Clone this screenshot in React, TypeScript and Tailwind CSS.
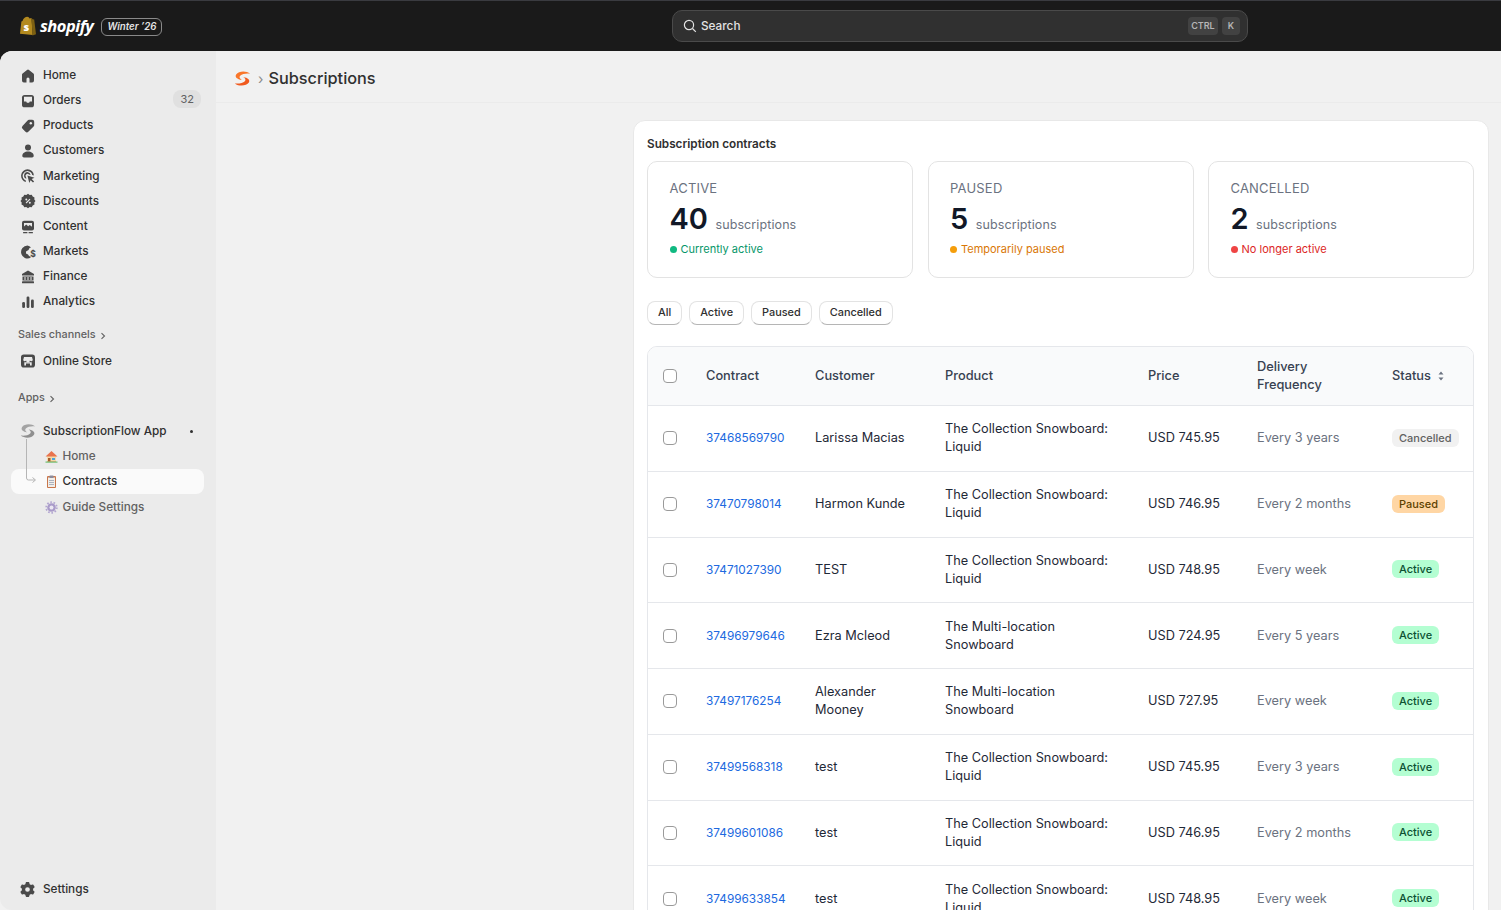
import React from "react";
import { FaGear } from "react-icons/fa6";

const I = ({ children }: { children: React.ReactNode }) => (
  <svg width="16" height="16" viewBox="0 0 16 16" fill="#4a4a4a" className="shrink-0">{children}</svg>
);

const icons: Record<string, React.ReactNode> = {
  home: <I><path d="M7 1.900a1.600 1.600 0 0 1 2 0l4.400 3.600c.4.300.6.800.6 1.300v5.700a1.900 1.900 0 0 1-1.900 1.900H9.500V11a1.500 1.500 0 0 0-3 0v3.400H3.900A1.900 1.900 0 0 1 2 12.500V6.800c0-.5.200-1 .6-1.300z" /></I>,
  orders: <I><rect x="2" y="2" width="12" height="12.300" rx="2.600" /><path d="M4 3.800h8v4.700h-2.200l-.7 1.300H6.900L6.200 8.500H4z" fill="#ebebeb" /></I>,
  products: <I><path d="M9 1.800h3.200a2 2 0 0 1 2 2V7a2 2 0 0 1-.6 1.400l-5.300 5.300a2 2 0 0 1-2.800 0l-3-3a2 2 0 0 1 0-2.800l5.100-5.500A2 2 0 0 1 9 1.800z" /><circle cx="10.800" cy="5.200" r="1.200" fill="#ebebeb" /></I>,
  customers: <I><circle cx="8" cy="4.400" r="3" /><path d="M8 8.500c-3.200 0-5.700 1.800-5.700 4.200 0 1 .7 1.700 1.600 1.700h8.200c.9 0 1.600-.7 1.600-1.700 0-2.400-2.500-4.200-5.700-4.200z" /></I>,
  marketing: <I><path d="M7.500 1.200a6.500 6.500 0 0 0-1.500 12.800l-.4-1.700a4.800 4.800 0 1 1 6.600-5.300l1.700.4A6.500 6.500 0 0 0 7.500 1.200z" /><path d="M7.500 4a3.500 3.500 0 0 0-1.100 6.800L6 9.100a1.900 1.900 0 1 1 2.900-2.500l1.700.4A3.500 3.500 0 0 0 7.500 4z" /><path d="M7.400 7.400l7.100 2.400-2.800 1.300 2.400 2.400-1.100 1.100-2.400-2.400-1.300 2.800z" /></I>,
  discounts: <I><path d="M8 .8l1.700 1.200 2-.2 1 1.800 1.800 1-.2 2L15.500 8l-1.200 1.400.2 2-1.800 1-1 1.800-2-.2L8 15.200 6.300 14l-2 .2-1-1.800-1.800-1 .2-2L.5 8l1.200-1.400-.2-2 1.800-1 1-1.800 2 .2z" /><path d="M10 6.200L6.100 10" stroke="#ebebeb" strokeWidth="1.100" /><circle cx="6.300" cy="6.500" r="1" fill="#ebebeb" /><circle cx="9.800" cy="9.700" r="1" fill="#ebebeb" /></I>,
  content: <I><rect x="2" y="1.800" width="12" height="9.700" rx="2" /><path d="M4 7.500l2.200-2 2 1.800 1.500-1.200L12 7.800v-3.800H4z" fill="#ebebeb" /><rect x="3" y="13" width="4.500" height="1.300" rx=".6" /><rect x="8.500" y="13" width="4.500" height="1.300" rx=".6" /></I>,
  markets: <I><path d="M7.500 1.500a6.500 6.500 0 1 0 3 12.300v-1.500H9.200L8 10.500 6 9.500V7.500l2.500-1.500 1-2 1.500-.5A6.500 6.500 0 0 0 7.500 1.500z" /><text x="10.300" y="12.800" fontSize="8.500" fontFamily="Inter, sans-serif" fontWeight="700">$</text></I>,
  finance: <I><path d="M8 1.500L14 5v1.500H2V5z" /><rect x="2.500" y="7.500" width="11" height="4" /><rect x="2" y="12.300" width="12" height="2" rx=".6" /><path d="M5 8v3M8 8v3M11 8v3" stroke="#ebebeb" strokeWidth="1" /></I>,
  analytics: <I><rect x="2.200" y="8" width="2.800" height="6" rx="1.300" /><rect x="6.600" y="2.500" width="2.800" height="11.500" rx="1.300" /><rect x="11" y="5.500" width="2.800" height="8.500" rx="1.300" /></I>,
  store: <I><rect x="1" y="1.500" width="14" height="13" rx="2.800" /><path d="M4 4h8l.8 3a1.600 1.600 0 0 1-2.900.6 1.700 1.700 0 0 1-3.800 0A1.600 1.600 0 0 1 3.200 7z" fill="#ebebeb" /><path d="M4.300 9.300h7.400V12.500H10V10.500H6V12.500H4.300z" fill="#ebebeb" /></I>,
};

const SLogo = ({ a, b, size = 16 }: { a: string; b: string; size?: number }) => {
  const d = "M15.200 3.400C11.500.4 4.300.7 2 4.200.5 6.600 3 8.600 7.300 9.400 5.300 8.100 4.600 6.700 5.800 5.500 7.700 3.600 11.600 2.900 15.200 3.400z";
  return (
    <svg width={size} height={size} viewBox="0 0 16 16" className="shrink-0">
      <path d={d} fill={a} />
      <path d={d} fill={b} transform="rotate(180 8 8)" />
    </svg>
  );
};

const nav = [
  ["home", "Home"],
  ["orders", "Orders"],
  ["products", "Products"],
  ["customers", "Customers"],
  ["marketing", "Marketing"],
  ["discounts", "Discounts"],
  ["content", "Content"],
  ["markets", "Markets"],
  ["finance", "Finance"],
  ["analytics", "Analytics"],
];

const Chevron = () => (
  <svg width="8" height="8" viewBox="0 0 8 8" fill="none" stroke="#616161" strokeWidth="1.100" className="ml-[3px] mt-[2px]">
    <path d="M2.500 1.200L5.500 4 2.500 6.800" />
  </svg>
);

const rows: [string, string[], string[], string, string, string][] = [
  ["37468569790", ["Larissa Macias"], ["The Collection Snowboard:", "Liquid"], "USD 745.95", "Every 3 years", "Cancelled"],
  ["37470798014", ["Harmon Kunde"], ["The Collection Snowboard:", "Liquid"], "USD 746.95", "Every 2 months", "Paused"],
  ["37471027390", ["TEST"], ["The Collection Snowboard:", "Liquid"], "USD 748.95", "Every week", "Active"],
  ["37496979646", ["Ezra Mcleod"], ["The Multi-location", "Snowboard"], "USD 724.95", "Every 5 years", "Active"],
  ["37497176254", ["Alexander", "Mooney"], ["The Multi-location", "Snowboard"], "USD 727.95", "Every week", "Active"],
  ["37499568318", ["test"], ["The Collection Snowboard:", "Liquid"], "USD 745.95", "Every 3 years", "Active"],
  ["37499601086", ["test"], ["The Collection Snowboard:", "Liquid"], "USD 746.95", "Every 2 months", "Active"],
  ["37499633854", ["test"], ["The Collection Snowboard:", "Liquid"], "USD 748.95", "Every week", "Active"],
];

const Badge = ({ s }: { s: string }) => {
  if (s === "Active")
    return <span className="rounded-md bg-[#b4fed2] px-[7px] text-[11px] font-medium leading-[18px] text-[#0c5132]">{s}</span>;
  if (s === "Paused")
    return <span className="rounded-md bg-[#ffd6a4] px-[7px] text-[11px] font-medium leading-[18px] text-[#5e4200]">{s}</span>;
  return <span className="rounded-md bg-[#f1f1f1] px-[7px] text-[11px] font-medium leading-[18px] text-[#616161]">{s}</span>;
};

const Check = () => <div className="h-[14px] w-[14px] rounded-[4px] border border-[#9a9a9a] bg-white" />;

const Stat = ({ label, n, note, dot, color }: { label: string; n: string; note: string; dot: string; color: string }) => (
  <div className="h-[117px] rounded-[10px] border border-[#e3e3e3] bg-white pl-[21.500px] pt-[17px]">
    <div className="text-[13px] leading-[18px] tracking-[0.2px] text-[#6b7280]">{label}</div>
    <div className="mt-[5px] flex h-[34px] items-end">
      <span className="text-[29px] font-semibold leading-[34px] text-[#111827]">{n}</span>
      <span className="mb-[2px] ml-[7.500px] text-[12.500px] leading-[18px] tracking-[0.1px] text-[#6b7280]">subscriptions</span>
    </div>
    <div className="mt-[5px] flex items-center text-[11px] leading-[16px]" style={{ color }}>
      <span className="mr-[4px] h-[7px] w-[7px] rounded-full" style={{ background: dot }} />
      {note}
    </div>
  </div>
);

const cols = "grid grid-cols-[58px_109px_130px_203px_109px_135px_1fr] items-center";

export default function App() {
  return (
    <div className="flex h-[910px] w-[1501px] flex-col overflow-hidden bg-[#1a1a1a] font-['Inter',sans-serif] text-[12.750px]">
      {/* Top bar */}
      <header className="grid h-[51px] shrink-0 grid-cols-[672px_576px_1fr] items-center border-t border-[#3a3b40]">
        <div className="flex items-center pl-[19px]">
          <svg width="18" height="20" viewBox="0 0 18 20">
            <path d="M3.500 5C4.500 2 6.500.8 8.200.8c1.200 0 2 .8 2.300 1.800l2-.6 1.200 17L1 17.800 2.400 5.500z" fill="#b38a1f" />
            <path d="M12.500 2l1.200 1.200 1.500.2 1.800 14.800-3.500 1.300z" fill="#7d6012" />
            <text x="4.600" y="14.500" fontSize="11" fontWeight="800" fill="#fff" fontFamily="'Open Sans', sans-serif">s</text>
          </svg>
          <span className="ml-[3px] font-['Open_Sans',sans-serif] text-[16.500px] font-bold italic leading-none tracking-[-0.5px] text-white">shopify</span>
          <span className="ml-[8px] mt-[1px] rounded-[6px] border border-[#8a8a8a] px-[5px] text-[9.700px] font-semibold italic leading-[16px] text-[#e3e3e3]">Winter ’26</span>
        </div>
        <div className="flex h-[32px] items-center rounded-[10px] border border-[#4a4a4a] bg-[#303030] pl-[10px] pr-[7px]">
          <svg width="14" height="14" viewBox="0 0 14 14" fill="none" stroke="#e3e3e3" strokeWidth="1.200">
            <circle cx="6" cy="6" r="4.600" />
            <path d="M9.500 9.500L12.800 12.800" />
          </svg>
          <span className="ml-[4px] mt-[1px] flex-1 text-[11.750px] font-medium text-[#e3e3e3]">Search</span>
          <span className="rounded-[4px] bg-[#424242] px-[3px] text-[9px] font-semibold leading-[18px] text-[#b5b5b5]">CTRL</span>
          <span className="ml-[4px] rounded-[4px] bg-[#424242] px-[6px] text-[9px] font-semibold leading-[18px] text-[#b5b5b5]">K</span>
        </div>
        <div />
      </header>

      <div className="flex min-h-0 flex-1 overflow-hidden rounded-tl-xl bg-[#f1f1f1]">
        {/* Sidebar */}
        <aside className="flex w-[216px] shrink-0 flex-col rounded-bl-xl bg-[#ebebeb] pt-[12.200px] text-[11.750px] text-[#303030]">
          <nav>
            {nav.map(([k, label]) => (
              <div key={k} className="flex h-[25.150px] items-center pl-[20px] pr-[15px]">
                {icons[k]}
                <span className="ml-[7px] flex-1 font-[450]">{label}</span>
                {label === "Orders" && (
                  <span className="mb-[3px] rounded-lg bg-[#e0e0e0] px-[7px] text-[11px] leading-[18px] text-[#616161]">32</span>
                )}
              </div>
            ))}
          </nav>
          <div className="mt-[9.300px] flex h-[22px] items-center pl-[18px] text-[10.800px] font-medium text-[#616161]">
            Sales channels
            <Chevron />
          </div>
          <div className="mt-[3px] flex h-[25px] items-center pl-[20px]">
            {icons.store}
            <span className="ml-[7px] font-[450]">Online Store</span>
          </div>
          <div className="mt-[13px] flex h-[22px] items-center pl-[18px] text-[10.800px] font-medium text-[#616161]">
            Apps
            <Chevron />
          </div>
          <div className="relative mt-[10px]">
            <svg width="14" height="50" viewBox="0 0 14 50" fill="none" stroke="#b5b5b5" className="absolute left-[26px] top-[20px]">
              <path d="M.5 0V39a2 2 0 0 0 2 2H9M6.500 38.500L9.500 41 6.500 43.500" />
            </svg>
            <div className="flex h-[25px] items-center pl-[20px] pr-[23px]">
              <SLogo a="#a3a3a3" b="#8f8f8f" />
              <span className="ml-[7px] flex-1 font-medium">SubscriptionFlow App</span>
              <span className="h-[3px] w-[3px] rounded-full bg-[#303030]" />
            </div>
            <div className="flex h-[25px] items-center pl-[45px] text-[#616161]">
              <svg width="13" height="13" viewBox="0 0 13 13" className="shrink-0">
                <path d="M6.500 1L.5 6.500h1.500V12h9V6.500h1.500z" fill="#e8744f" />
                <rect x="2" y="6.500" width="9" height="5" fill="#f5d9a8" />
                <rect x="3" y="8" width="2.500" height="3.500" fill="#a65c2e" />
                <rect x="7" y="8" width="3" height="2" fill="#4aa3df" />
                <rect x="0.500" y="11.500" width="12" height="1.200" fill="#6fbf73" />
              </svg>
              <span className="ml-[4.500px] font-[450]">Home</span>
            </div>
            <div className="ml-[11px] mr-[12px] flex h-[25px] items-center rounded-lg bg-[#fafafa] pl-[34px] text-[#303030]">
              <svg width="13" height="13" viewBox="0 0 13 13" className="shrink-0">
                <rect x="2" y="1" width="9" height="12" rx="1" fill="#c9764a" />
                <rect x="3" y="2.500" width="7" height="9.500" fill="#f1eee9" />
                <rect x="4.500" y="0.500" width="4" height="2.500" rx=".5" fill="#8b8b9c" />
                <path d="M4 5.500h5M4 7.500h5M4 9.500h5" stroke="#9aa3b5" strokeWidth=".8" />
              </svg>
              <span className="ml-[4.500px] font-medium">Contracts</span>
            </div>
            <div className="flex h-[27px] items-center pl-[45px] text-[#616161]">
              <svg width="13" height="13" viewBox="0 0 13 13" className="shrink-0">
                <circle cx="6.500" cy="6.500" r="4.300" fill="#a99bc9" />
                <circle cx="6.500" cy="6.500" r="5.300" fill="none" stroke="#b3a6d1" strokeWidth="1.800" strokeDasharray="1.600 1.700" />
                <circle cx="6.500" cy="6.500" r="2" fill="#ebe7f2" />
              </svg>
              <span className="ml-[4.500px] font-[450]">Guide Settings</span>
            </div>
          </div>
          <div className="mb-[8px] mt-auto flex h-[25px] items-center pl-[20px]">
            <FaGear size={15} color="#4a4a4a" className="shrink-0" />
            <span className="ml-[8px] font-[450]">Settings</span>
          </div>
        </aside>

        {/* Main */}
        <main className="min-w-0 flex-1 overflow-hidden">
          <div className="flex h-[52px] items-center border-b border-[#ebebeb] pl-[18px] pt-[4px]">
            <SLogo a="#f9762a" b="#f05a1e" size={17} />
            <span className="ml-[7px] mr-[5px] text-[14px] leading-none text-[#8a8a8a]">›</span>
            <span className="text-[16.300px] font-medium text-[#303030]">Subscriptions</span>
          </div>
          <div className="flex justify-end pr-[12px] pt-[17px]">
            <section className="w-[856px] shrink-0 rounded-t-[12px] border border-[#e8e8e8] bg-white pl-[13px] pr-[14px] pt-[14px]">
              <h2 className="text-[11.750px] font-semibold leading-[18px] text-[#303030]">Subscription contracts</h2>
              <div className="mt-[8px] grid grid-cols-3 gap-[14.500px]">
                <Stat label="ACTIVE" n="40" note="Currently active" dot="#10b981" color="#059669" />
                <Stat label="PAUSED" n="5" note="Temporarily paused" dot="#f59e0b" color="#d97706" />
                <Stat label="CANCELLED" n="2" note="No longer active" dot="#ef4444" color="#dc2626" />
              </div>
              <div className="mt-[23px] flex gap-[7px]">
                {["All", "Active", "Paused", "Cancelled"].map((t) => (
                  <button key={t} className="h-[24px] rounded-lg border border-[#e3e3e3] border-b-[#b5b5b5] bg-white px-[10px] pb-[2px] text-[10.900px] font-medium text-[#303030]">
                    {t}
                  </button>
                ))}
              </div>
              <div className="mt-[21px] overflow-hidden rounded-t-[10px] border border-[#e5e7eb]">
                <div className={`${cols} h-[58px] bg-[#f9fafb] text-[12.800px] font-medium leading-[18px] text-[#374151]`}>
                  <div className="pl-[15px]"><Check /></div>
                  <div>Contract</div>
                  <div>Customer</div>
                  <div>Product</div>
                  <div>Price</div>
                  <div>Delivery<br />Frequency</div>
                  <div className="flex items-center">
                    Status
                    <svg width="8" height="12" viewBox="0 0 8 12" fill="#6b7280" className="ml-[6px]">
                      <path d="M4 1.500L6.500 4.500h-5zM4 10.500L1.500 7.500h5z" />
                    </svg>
                  </div>
                </div>
                {rows.map((r) => (
                  <div key={r[0]} className={`${cols} h-[65.750px] border-t border-[#e5e7eb] leading-[18px] text-[#1f2937]`}>
                    <div className="pl-[15px]"><Check /></div>
                    <div className="text-[11.800px] text-[#2069e0]">{r[0]}</div>
                    <div>{r[1].map((l) => <div key={l}>{l}</div>)}</div>
                    <div>{r[2].map((l) => <div key={l}>{l}</div>)}</div>
                    <div>{r[3]}</div>
                    <div className="text-[#6b7280]">{r[4]}</div>
                    <div className="mb-[1px] flex"><Badge s={r[5]} /></div>
                  </div>
                ))}
              </div>
            </section>
          </div>
        </main>
      </div>
    </div>
  );
}
